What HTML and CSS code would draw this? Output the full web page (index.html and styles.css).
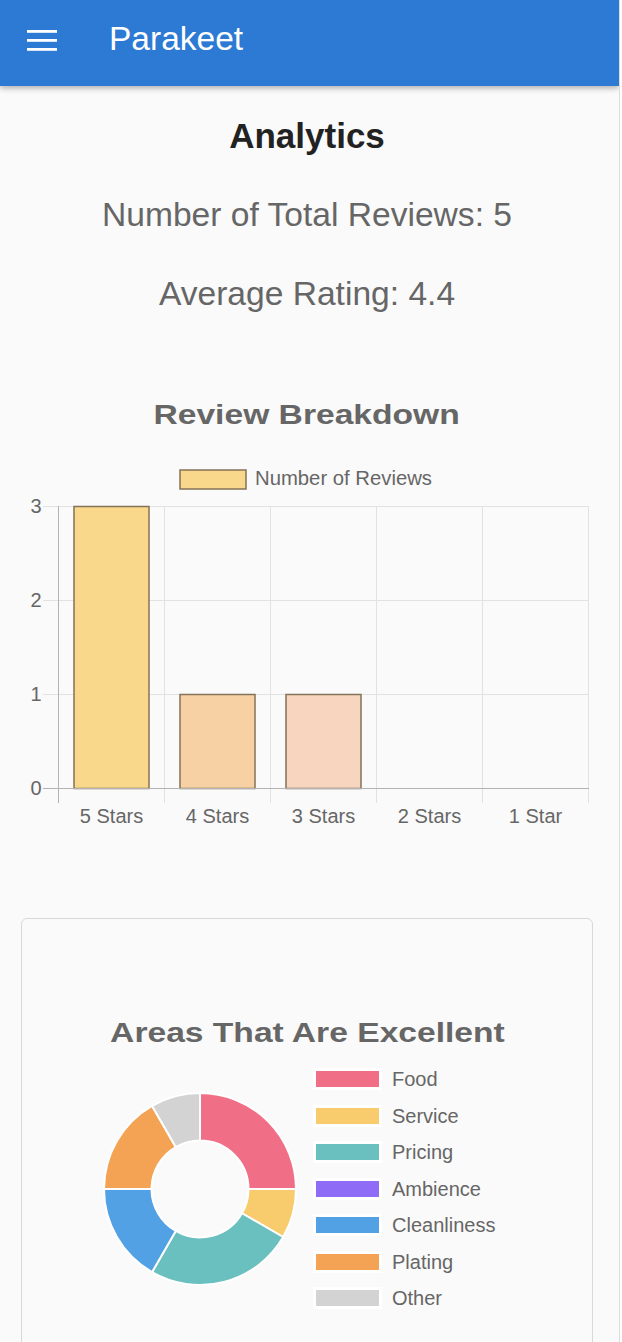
FILE: index.html
```html
<!DOCTYPE html>
<html lang="en">
<head>
<meta charset="utf-8">
<title>Parakeet - Analytics</title>
<link rel="stylesheet" href="styles.css">
</head>
<body>
<div class="page">
  <header class="appbar">
    <svg class="menu-icon" width="30" height="21" viewBox="0 0 30 21" aria-hidden="true">
      <rect x="0" y="0" width="30" height="2.8" fill="#fff"/>
      <rect x="0" y="9" width="30" height="2.8" fill="#fff"/>
      <rect x="0" y="18" width="30" height="2.8" fill="#fff"/>
    </svg>
    <span class="brand">Parakeet</span>
  </header>

  <main class="content">
    <h1 class="page-title">Analytics</h1>
    <p class="stat">Number of Total Reviews: 5</p>
    <p class="stat">Average Rating: 4.4</p>

    <h2 class="chart-title"><span>Review Breakdown</span></h2>

    <svg class="bar-chart" width="614" height="400" viewBox="0 440 614 400" font-family="Liberation Sans, Arial, sans-serif">
      <!-- legend -->
      <rect x="180" y="470" width="66" height="19" fill="#f9d78b" stroke="#837358" stroke-width="1.5"/>
      <text x="255" y="485" font-size="20.3" fill="#666">Number of Reviews</text>

      <!-- gridlines -->
      <g stroke="#e2e2e2" stroke-width="1">
        <line x1="43" y1="506.5" x2="589" y2="506.5"/>
        <line x1="43" y1="600.5" x2="589" y2="600.5"/>
        <line x1="43" y1="694.5" x2="589" y2="694.5"/>
        <line x1="164.5" y1="506" x2="164.5" y2="803"/>
        <line x1="270.5" y1="506" x2="270.5" y2="803"/>
        <line x1="376.5" y1="506" x2="376.5" y2="803"/>
        <line x1="482.5" y1="506" x2="482.5" y2="803"/>
        <line x1="588.5" y1="506" x2="588.5" y2="803"/>
      </g>

      <!-- bars -->
      <g stroke="#837358" stroke-width="1.5">
        <rect x="74" y="506.5" width="75" height="282" fill="#f9d78b"/>
        <rect x="180" y="694.5" width="75" height="94" fill="#f7d1a3"/>
        <rect x="286" y="694.5" width="75" height="94" fill="#f7d5bf"/>
      </g>

      <!-- axes -->
      <g stroke="#b3b3b3" stroke-width="1">
        <line x1="43" y1="788.5" x2="589" y2="788.5"/>
        <line x1="58.5" y1="506" x2="58.5" y2="803"/>
      </g>

      <!-- y labels -->
      <g font-size="20" fill="#666" text-anchor="end">
        <text x="41.5" y="513">3</text>
        <text x="41.5" y="607">2</text>
        <text x="41.5" y="701">1</text>
        <text x="41.5" y="795">0</text>
      </g>

      <!-- x labels -->
      <g font-size="20" fill="#666" text-anchor="middle">
        <text x="111.5" y="822.5">5 Stars</text>
        <text x="217.5" y="822.5">4 Stars</text>
        <text x="323.5" y="822.5">3 Stars</text>
        <text x="429.5" y="822.5">2 Stars</text>
        <text x="535.5" y="822.5">1 Star</text>
      </g>
    </svg>

    <section class="card">
      <h2 class="chart-title"><span>Areas That Are Excellent</span></h2>
      <div class="donut-row">
        <svg class="donut" width="200" height="200" viewBox="0 0 200 200" aria-hidden="true">
          <g stroke="#fff" stroke-width="2" stroke-linejoin="round">
            <path fill="#f06f86" d="M100,4 A96,96 0 0 1 196,100 L148.5,100 A48.5,48.5 0 0 0 100,51.5 Z"/>
            <path fill="#f8cb6c" d="M196,100 A96,96 0 0 1 183.14,148 L142,124.25 A48.5,48.5 0 0 0 148.5,100 Z"/>
            <path fill="#6abfbf" d="M183.14,148 A96,96 0 0 1 52,183.14 L75.75,142 A48.5,48.5 0 0 0 142,124.25 Z"/>
            <path fill="#52a1e4" d="M52,183.14 A96,96 0 0 1 4,100 L51.5,100 A48.5,48.5 0 0 0 75.75,142 Z"/>
            <path fill="#f3a353" d="M4,100 A96,96 0 0 1 52,16.86 L75.75,58 A48.5,48.5 0 0 0 51.5,100 Z"/>
            <path fill="#d3d3d4" d="M52,16.86 A96,96 0 0 1 100,4 L100,51.5 A48.5,48.5 0 0 0 75.75,58 Z"/>
          </g>
        </svg>
        <ul class="legend">
          <li class="legend-item"><span class="swatch swatch-food"></span><span class="legend-label">Food</span></li>
          <li class="legend-item"><span class="swatch swatch-service"></span><span class="legend-label">Service</span></li>
          <li class="legend-item"><span class="swatch swatch-pricing"></span><span class="legend-label">Pricing</span></li>
          <li class="legend-item"><span class="swatch swatch-ambience"></span><span class="legend-label">Ambience</span></li>
          <li class="legend-item"><span class="swatch swatch-clean"></span><span class="legend-label">Cleanliness</span></li>
          <li class="legend-item"><span class="swatch swatch-plating"></span><span class="legend-label">Plating</span></li>
          <li class="legend-item"><span class="swatch swatch-other"></span><span class="legend-label">Other</span></li>
        </ul>
      </div>
    </section>
  </main>
</div>
</body>
</html>
```

FILE: styles.css
```css
html {
  background: #ffffff;
}

body {
  margin: 0;
  font-family: "Liberation Sans", Arial, Helvetica, sans-serif;
  color: #666666;
}

.page {
  width: 619px;
  min-height: 1342px;
  background: #fafafa;
  border-right: 1px solid #dcdcdc;
  overflow: hidden;
}

.appbar {
  position: relative;
  z-index: 2;
  height: 86px;
  background: #2c7ad3;
  display: flex;
  align-items: flex-start;
  padding-left: 27px;
  box-shadow: 0 2px 6px rgba(0, 0, 0, 0.32);
}

.menu-icon {
  display: block;
  margin-top: 30px;
  flex: none;
}

.brand {
  margin-top: 19px;
  margin-left: 52px;
  font-size: 33.5px;
  line-height: 40px;
  color: #ffffff;
}

.content {
  padding-right: 5px;
  padding-bottom: 40px;
}

.page-title {
  margin: 30px 0 0;
  font-size: 35px;
  line-height: 40px;
  font-weight: bold;
  color: #222222;
  text-align: center;
}

.stat {
  margin: 39px 0 0;
  font-size: 33.6px;
  line-height: 40px;
  color: #666666;
  text-align: center;
}

.chart-title {
  margin: 84px 0 0;
  font-size: 28px;
  line-height: 34px;
  font-weight: bold;
  color: #666666;
  text-align: center;
}

.chart-title span {
  display: inline-block;
  transform: scaleX(1.2);
  transform-origin: center;
}

.bar-chart {
  display: block;
  margin-top: 8px;
}

.card {
  margin: 78px 21px 0;
  border: 1px solid #d9d9d9;
  border-radius: 6px;
  padding: 97px 0 60px;
}

.card .chart-title {
  margin-top: 0;
}

.donut-row {
  display: flex;
  align-items: center;
  margin-top: 11px;
  padding-left: 78px;
}

.donut {
  display: block;
  flex: none;
}

.legend {
  list-style: none;
  margin: 0 0 0 13px;
  padding: 0;
}

.legend-item {
  display: flex;
  align-items: center;
  height: 36.5px;
}

.swatch {
  display: block;
  width: 63px;
  height: 16px;
  border: 3px solid #ffffff;
  flex: none;
}

.swatch-food { background: #f06f86; }
.swatch-service { background: #f8cb6c; }
.swatch-pricing { background: #6abfbf; }
.swatch-ambience { background: #8f6cf5; }
.swatch-clean { background: #52a1e4; }
.swatch-plating { background: #f3a353; }
.swatch-other { background: #d3d3d4; }

.legend-label {
  margin-left: 10px;
  font-size: 20px;
  line-height: 20px;
  color: #666666;
}
```
